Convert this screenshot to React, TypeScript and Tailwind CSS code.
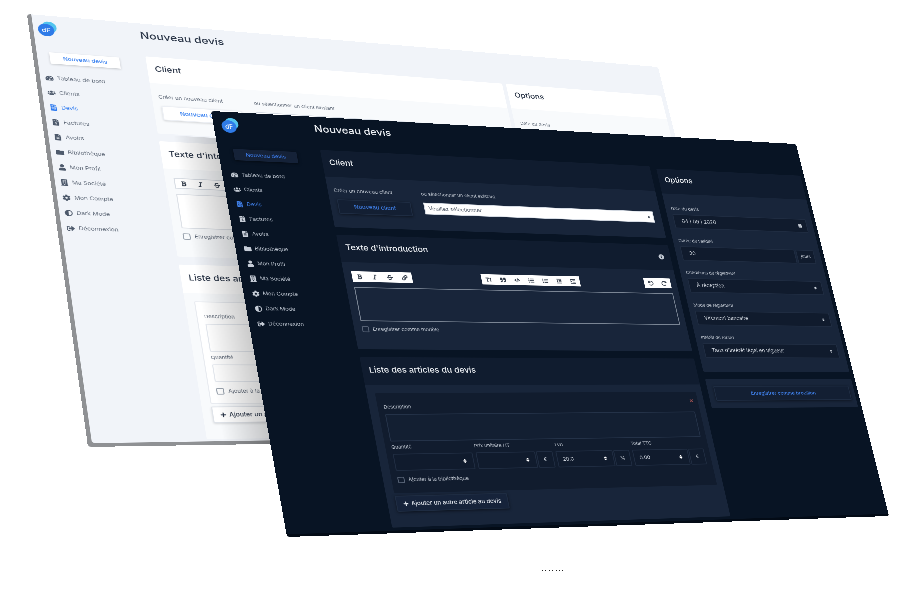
import React from "react";
import {
  FaTachometerAlt, FaUsers, FaFileInvoice, FaFileInvoiceDollar, FaFileAlt, FaFolder, FaUser, FaBuilding, FaCog, FaAdjust, FaSignOutAlt,
  FaBold, FaItalic, FaStrikethrough, FaLink, FaTextHeight, FaQuoteRight, FaCode, FaListUl, FaListOl, FaOutdent, FaIndent, FaUndo, FaRedo,
  FaInfoCircle, FaTimes, FaPlus, FaSort, FaCalendarAlt,
} from "react-icons/fa";

type P = [number, number];
const W = 1400;
const H = 1008;

function toMatrix(q: [P, P, P, P]) {
  const [[x0, y0], [x1, y1], [x2, y2], [x3, y3]] = q;
  const dx1 = x1 - x2, dx2 = x3 - x2, sx = x0 - x1 + x2 - x3;
  const dy1 = y1 - y2, dy2 = y3 - y2, sy = y0 - y1 + y2 - y3;
  const den = dx1 * dy2 - dx2 * dy1;
  const g = (sx * dy2 - dx2 * sy) / den;
  const h = (dx1 * sy - sx * dy1) / den;
  const a = x1 - x0 + g * x1, b = x3 - x0 + h * x3;
  const d = y1 - y0 + g * y1, e = y3 - y0 + h * y3;
  return `matrix3d(${a / W},${d / W},0,${g / W},${b / H},${e / H},0,${h / H},0,0,1,0,${x0},${y0},0,1)`;
}

const darkT = {
  page: "bg-[#081424] shadow-[inset_0_-6px_0_#030b16]",
  col: "w-[379px] ml-[16px] pt-[90px]",
  title: "text-[#eef1f5]",
  nav: "text-[#c0c8d3]",
  icon: "text-[#c6cdd7]",
  active: "text-[#3f7fe8]",
  side: "bg-[#152238] text-[#3a78e4] shadow-[0_2px_6px_rgba(0,0,0,0.5)]",
  head: "bg-[#101c2f]",
  body: "bg-[#18253a]",
  label: "text-[#c2c9d3]",
  spin: "text-white",
  btn: "bg-[#131f33] text-[#3f7fe8] shadow-[0_2px_6px_rgba(0,0,0,0.45)] border-2 border-[#1e2c42]",
  select: "bg-white text-[#4b5563] border-2 border-[#d5dbe3]",
  tool: "bg-white text-[#2f3947]",
  editor: "bg-[#18253a] border-2 border-[#7a8594]",
  check: "border-2 border-[#566275]",
  inner: "bg-[#111c2e]",
  input: "bg-[#101b2d] border-2 border-[#1f2c41] text-[#d3d9e1]",
  add: "bg-[#16233a] text-[#e6eaf0] shadow-[0_2px_6px_rgba(0,0,0,0.5)] border-2 border-[#1e2c42]",
  area: "bg-[#131f32] border-2 border-[#243248]",
};
const lightT = {
  page: "bg-[#f1f4f9] shadow-[inset_8px_-8px_0_#8f9194]",
  col: "w-[385px] ml-[9px] pt-[84px]",
  title: "text-[#2b3648]",
  nav: "text-[#5f6978]",
  icon: "text-[#4e5a6c]",
  active: "text-[#2f7bf0]",
  side: "bg-white text-[#2f7bf0] shadow-[0_2px_5px_rgba(0,0,0,0.18)]",
  head: "bg-white",
  body: "bg-[#f8fafc]",
  label: "text-[#5d6776]",
  spin: "text-[#4b5563]",
  btn: "bg-white text-[#2f7bf0] shadow-[0_2px_5px_rgba(0,0,0,0.15)] border-2 border-[#eceff4]",
  select: "bg-white text-[#4b5563] border-2 border-[#d5dbe3]",
  tool: "bg-white text-[#2f3947] border-2 border-[#d8dde4]",
  editor: "bg-white border-2 border-[#dde1e7]",
  check: "border-2 border-[#9aa3ae]",
  inner: "bg-white border-2 border-[#e8ebf0]",
  input: "bg-white border-2 border-[#e4e8ee] text-[#4b5563]",
  add: "bg-white text-[#2b3648] shadow-[0_2px_5px_rgba(0,0,0,0.15)] border-2 border-[#dfe3e9]",
  area: "bg-white border-2 border-[#e4e8ee]",
};
type T = typeof darkT;

const navItems: [string, React.ComponentType<{ className?: string }>][] = [
  ["Tableau de bord", FaTachometerAlt],
  ["Clients", FaUsers],
  ["Devis", FaFileInvoice],
  ["Factures", FaFileInvoiceDollar],
  ["Avoirs", FaFileAlt],
  ["Bibliothèque", FaFolder],
  ["Mon Profil", FaUser],
  ["Ma Société", FaBuilding],
  ["Mon Compte", FaCog],
  ["Dark Mode", FaAdjust],
  ["Déconnexion", FaSignOutAlt],
];

function Logo() {
  return (
    <div className="relative w-[34px] h-[34px]">
      <div className="absolute right-[-2px] top-[-3px] w-[28px] h-[28px] rounded-full bg-[#53c4ee]" />
      <div className="absolute left-0 bottom-0 w-[31px] h-[31px] rounded-full bg-[#2f7be8] flex items-center justify-center text-white text-[14px] font-medium">
        dF
      </div>
    </div>
  );
}

function Sidebar({ t }: { t: T }) {
  return (
    <div className="w-[220px] shrink-0 flex flex-col pl-[16px]">
      <div className="pt-[18px] pl-[1px]">
        <Logo />
      </div>
      <div className={`mt-[40px] ml-[16px] w-[135px] h-[28px] flex items-center justify-center text-[12px] font-medium ${t.side}`}>
        Nouveau devis
      </div>
      <div className="mt-[18px] flex flex-col">
        {navItems.map(([name, Icon]) => {
          const on = name === "Devis";
          return (
            <div key={name} className={`h-[36px] flex items-center gap-[6px] text-[12px] ${on ? t.active : t.nav}`}>
              <span className="w-[18px] flex justify-center">
                <Icon className={`text-[15px] ${on ? t.active : t.icon}`} />
              </span>
              {name}
            </div>
          );
        })}
      </div>
    </div>
  );
}

function Card({ t, title, right, lift, children }: { t: T; title: string; right?: React.ReactNode; lift?: boolean; children: React.ReactNode }) {
  return (
    <div className="h-full flex flex-col rounded-[3px] overflow-hidden">
      <div className={`h-[67px] shrink-0 flex items-center justify-between pl-[15px] pr-[16px] text-[19px] font-medium ${lift ? "pb-[6px]" : "pb-[4px]"} ${t.head} ${t.title}`}>
        <span>{title}</span>
        {right}
      </div>
      <div className={`flex-1 ${t.body}`}>{children}</div>
    </div>
  );
}

function Tools({ t, icons }: { t: T; icons: React.ComponentType<{ className?: string }>[] }) {
  return (
    <div className={`flex h-[26px] ${t.tool}`}>
      {icons.map((I, i) => (
        <div key={i} className="w-[33px] flex items-center justify-center">
          <I className="text-[13px]" />
        </div>
      ))}
    </div>
  );
}

function Check({ t, label }: { t: T; label: string }) {
  return (
    <div className={`flex items-center gap-[8px] text-[11.5px] ${t.label}`}>
      <span className={`w-[15px] h-[15px] rounded-[3px] ${t.check}`} />
      {label}
    </div>
  );
}

function Num({ t, label, value, unit }: { t: T; label: string; value?: string; unit?: string }) {
  return (
    <div className="flex flex-col">
      <div className={`h-[16px] mb-[8px] text-[11px] ${t.label}`}>{label}</div>
      <div className="flex h-[40px] gap-[2px]">
        <div className={`flex-1 flex items-center justify-between px-[12px] text-[12px] rounded-[3px] ${t.input}`}>
          <span>{value}</span>
          <FaSort className={`text-[12px] ${t.spin}`} />
        </div>
        {unit && <div className={`w-[38px] flex items-center justify-center text-[12px] rounded-[3px] ${t.input}`}>{unit}</div>}
      </div>
    </div>
  );
}

function Opt({ t, label, children, icon, extra }: { t: T; label: string; children: React.ReactNode; icon?: React.ReactNode; extra?: React.ReactNode }) {
  return (
    <div className="mb-[24.5px]">
      <div className={`h-[16px] mb-[7px] text-[11px] ${t.label}`}>{label}</div>
      <div className="flex h-[38px] gap-[3px]">
        <div className={`flex-1 flex items-center justify-between pl-[18px] pr-[12px] text-[13px] rounded-[3px] ${t.input}`}>
          <span>{children}</span>
          {icon}
        </div>
        {extra}
      </div>
    </div>
  );
}

function Screen({ t, quad, shade }: { t: T; quad: [P, P, P, P]; shade?: boolean }) {
  const sort = <FaSort className="text-[10px]" />;
  return (
    <div
      className={`absolute left-0 top-0 w-[1400px] h-[1008px] origin-top-left flex overflow-hidden rounded-[6px] will-change-transform font-['Inter',sans-serif] ${t.page}`}
      style={{ transform: toMatrix(quad) }}
    >
      <Sidebar t={t} />
      <div className="w-[775px] shrink-0 flex flex-col">
        <div className={`h-[84px] shrink-0 flex items-center text-[24px] font-medium pb-[22px] -ml-[4px] ${t.title}`}>Nouveau devis</div>
        <div className="h-[193px]">
          <Card t={t} title="Client">
            <div className="flex pl-[13px] pt-[26px]">
              <div className="w-[194px]">
                <div className={`h-[16px] mb-[14px] text-[11.5px] ${t.label}`}>Créer un nouveau client</div>
                <div className={`ml-[3px] w-[163px] h-[36px] flex items-center justify-center text-[13px] font-medium rounded-[3px] ${t.btn}`}>
                  Nouveau client
                </div>
              </div>
              <div>
                <div className={`h-[16px] mb-[14px] text-[11px] ${t.label}`}>ou sélectionner un client existant</div>
                <div className={`ml-[1px] w-[548px] h-[30px] flex items-center justify-between pl-[8px] pr-[6px] text-[12.5px] ${t.select}`}>
                  <span>Veuillez sélectionner</span>
                  <FaSort className="text-[9px]" />
                </div>
              </div>
            </div>
          </Card>
        </div>
        <div className="h-[279px] mt-[19px]">
          <Card t={t} title="Texte d'introduction" right={<FaInfoCircle className={`text-[14px] ${t.label}`} />}>
            <div className="pl-[17px] pr-[15px] pt-[22px]">
              <div className="flex justify-between">
                <Tools t={t} icons={[FaBold, FaItalic, FaStrikethrough, FaLink]} />
                <Tools t={t} icons={[FaTextHeight, FaQuoteRight, FaCode, FaListUl, FaListOl, FaOutdent, FaIndent]} />
                <Tools t={t} icons={[FaUndo, FaRedo]} />
              </div>
              <div className={`mt-[13px] h-[83px] ${t.editor}`} />
              <div className="mt-[11px]">
                <Check t={t} label="Enregistrer comme modèle" />
              </div>
            </div>
          </Card>
        </div>
        <div className="h-[401px] mt-[19px]">
          <Card t={t} title="Liste des articles du devis">
            <div className="pl-[18px] pr-[15px] pt-[19px]">
              <div className={`relative h-[236px] px-[13px] pt-[25px] rounded-[3px] ${t.inner}`}>
                <FaTimes className="absolute right-[10px] top-[17px] text-[11px] text-[#9a4f4f]" />
                <div className={`h-[16px] mb-[9px] text-[11px] ${t.label}`}>Description</div>
                <div className={`h-[65px] mb-[5px] rounded-[3px] ${t.area}`} />
                <div className="grid grid-cols-4 gap-[7px]">
                  <Num t={t} label="Quantité" />
                  <Num t={t} label="Prix unitaire HT" unit="€" />
                  <Num t={t} label="TVA" value="20.0" unit="%" />
                  <Num t={t} label="Total TTC" value="0.00" unit="€" />
                </div>
                <div className="mt-[13px]">
                  <Check t={t} label="Ajouter à la bibliothèque" />
                </div>
              </div>
              <div className={`mt-[6px] w-[245px] h-[37px] flex items-center justify-center gap-[5px] text-[13px] font-medium rounded-[3px] ${t.add}`}>
                <FaPlus className="text-[12px]" />
                Ajouter un autre article au devis
              </div>
            </div>
          </Card>
        </div>
      </div>
      <div className={`shrink-0 flex flex-col ${t.col}`}>
        <div className="h-[538px]">
          <Card t={t} title="Options" lift>
            <div className="pl-[14px] pr-[16px] pt-[32px]">
              <Opt t={t} label="Date du devis" icon={<FaCalendarAlt className="text-[10px]" />}>
                04 | 09 | 2020
              </Opt>
              <Opt t={t} label="Durée de validité" extra={<div className={`w-[48px] flex items-center justify-center text-[11px] rounded-[3px] ${t.input}`}>jours</div>}>
                30
              </Opt>
              <Opt t={t} label="Conditions de règlement" icon={sort}>
                À réception
              </Opt>
              <Opt t={t} label="Mode de règlement" icon={sort}>
                Virement bancaire
              </Opt>
              <Opt t={t} label="Intérêt de retard" icon={sort}>
                Taux d'intérêt légal en vigueur
              </Opt>
            </div>
          </Card>
        </div>
        <div className={`h-[75px] mt-[19px] pl-[16px] pr-[12px] pt-[18px] rounded-[3px] ${t.body}`}>
          <div className={`h-[38px] flex items-center justify-center text-[12.5px] font-medium rounded-[3px] ${t.btn}`}>
            Enregistrer comme brouillon
          </div>
        </div>
      </div>
      {shade && <div className="absolute left-[250px] w-[130px] top-[280px] bottom-0 bg-gradient-to-r from-transparent to-black/30" />}
    </div>
  );
}

export default function App() {
  return (
    <div className="relative w-[910px] h-[614px] bg-white overflow-hidden">
      <Screen t={lightT} quad={[[27, 14], [658, 67], [750, 436], [88, 447]]} shade />
      <Screen t={darkT} quad={[[211, 111], [796, 144], [889, 516], [287, 537]]} />
      <div className="absolute left-[542px] top-[570px] flex gap-[2.4px]">
        {[0, 1, 2, 3, 4, 5, 6].map((i) => (
          <span key={i} className="w-[1px] h-[1px] bg-[#222]" />
        ))}
      </div>
    </div>
  );
}
